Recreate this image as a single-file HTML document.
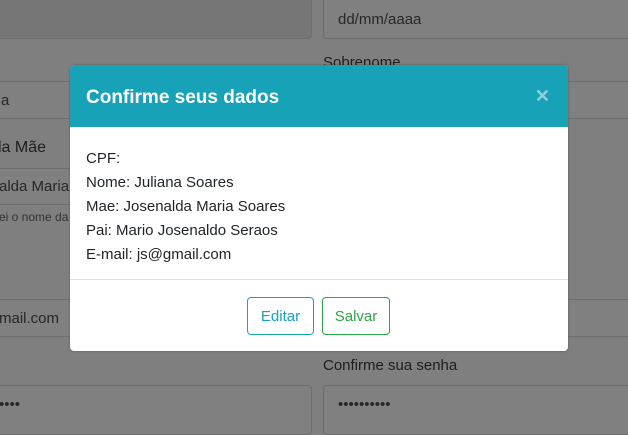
<!DOCTYPE html>
<html><head><meta charset="utf-8"><style>
*{box-sizing:border-box;margin:0;padding:0}
body{width:628px;height:420px;overflow:hidden;background:#7f7f7f;font-family:"Liberation Sans",sans-serif;position:relative;color:#1a1a1a}
.inp{position:absolute;border:1px solid #6e6e6e;border-radius:4px;background:#808080;font-size:15px;color:#272727;padding-left:14px;display:flex;align-items:center}
.lbl{position:absolute;font-size:15px;color:#1e1e1e}
.modal{position:absolute;left:70px;top:65px;width:498px;height:286px;background:#fff;border-radius:4px;overflow:hidden;box-shadow:0 0 2px rgba(0,0,0,.3)}
.hd{height:62px;background:#17a2b8;color:#fff;font-weight:bold;font-size:19px;padding:22px 0 0 16px;position:relative}
.x{position:absolute;right:18px;top:21px;font-size:18px;color:#8fd0db;font-weight:bold}
.bd{padding:20px 16px 0;font-size:15px;line-height:24px;color:#212529;height:153px;border-bottom:1px solid #e0e0e8}
.btn{position:absolute;top:232px;height:38px;border-radius:4px;font-size:15px;display:flex;align-items:center;justify-content:center;background:#fff}
</style></head><body>
<div class="inp" style="left:-10px;top:-10px;width:322px;height:49px;background:#767676"></div>
<div class="inp" style="left:323px;top:-10px;width:320px;height:49px;padding-top:10px">dd/mm/aaaa</div>
<div class="lbl" style="left:323px;top:54px">Sobrenome</div>
<div class="inp" style="left:-10px;top:81px;width:322px;height:38px;padding-left:10px">a</div>
<div class="inp" style="left:323px;top:81px;width:320px;height:38px"></div>
<div class="lbl" style="left:-2px;top:139px;font-size:16px">la Mãe</div>
<div class="inp" style="left:-10px;top:168px;width:322px;height:37px;padding-left:8px">alda Maria</div>
<div class="lbl" style="left:-1px;top:210px;font-size:12px;color:#333">ei o nome da</div>
<div class="inp" style="left:-10px;top:299px;width:322px;height:38px;padding-left:8px">mail.com</div>
<div class="inp" style="left:323px;top:299px;width:320px;height:38px"></div>
<div class="lbl" style="left:323px;top:357px">Confirme sua senha</div>
<div class="inp" style="left:-10px;top:385px;width:322px;height:50px;padding-left:8px;padding-bottom:12px">••••</div>
<div class="inp" style="left:323px;top:385px;width:320px;height:50px;padding-bottom:12px">••••••••••</div>
<div class="modal">
<div class="hd">Confirme seus dados<span class="x">✕</span></div>
<div class="bd">CPF:<br>Nome: Juliana Soares<br>Mae: Josenalda Maria Soares<br>Pai: Mario Josenaldo Seraos<br>E-mail: js@gmail.com</div>
<div class="btn" style="left:177px;width:67px;border:1px solid #17a2b8;color:#17a2b8">Editar</div>
<div class="btn" style="left:252px;width:68px;border:1px solid #28a745;color:#28a745">Salvar</div>
</div>
</body></html>
